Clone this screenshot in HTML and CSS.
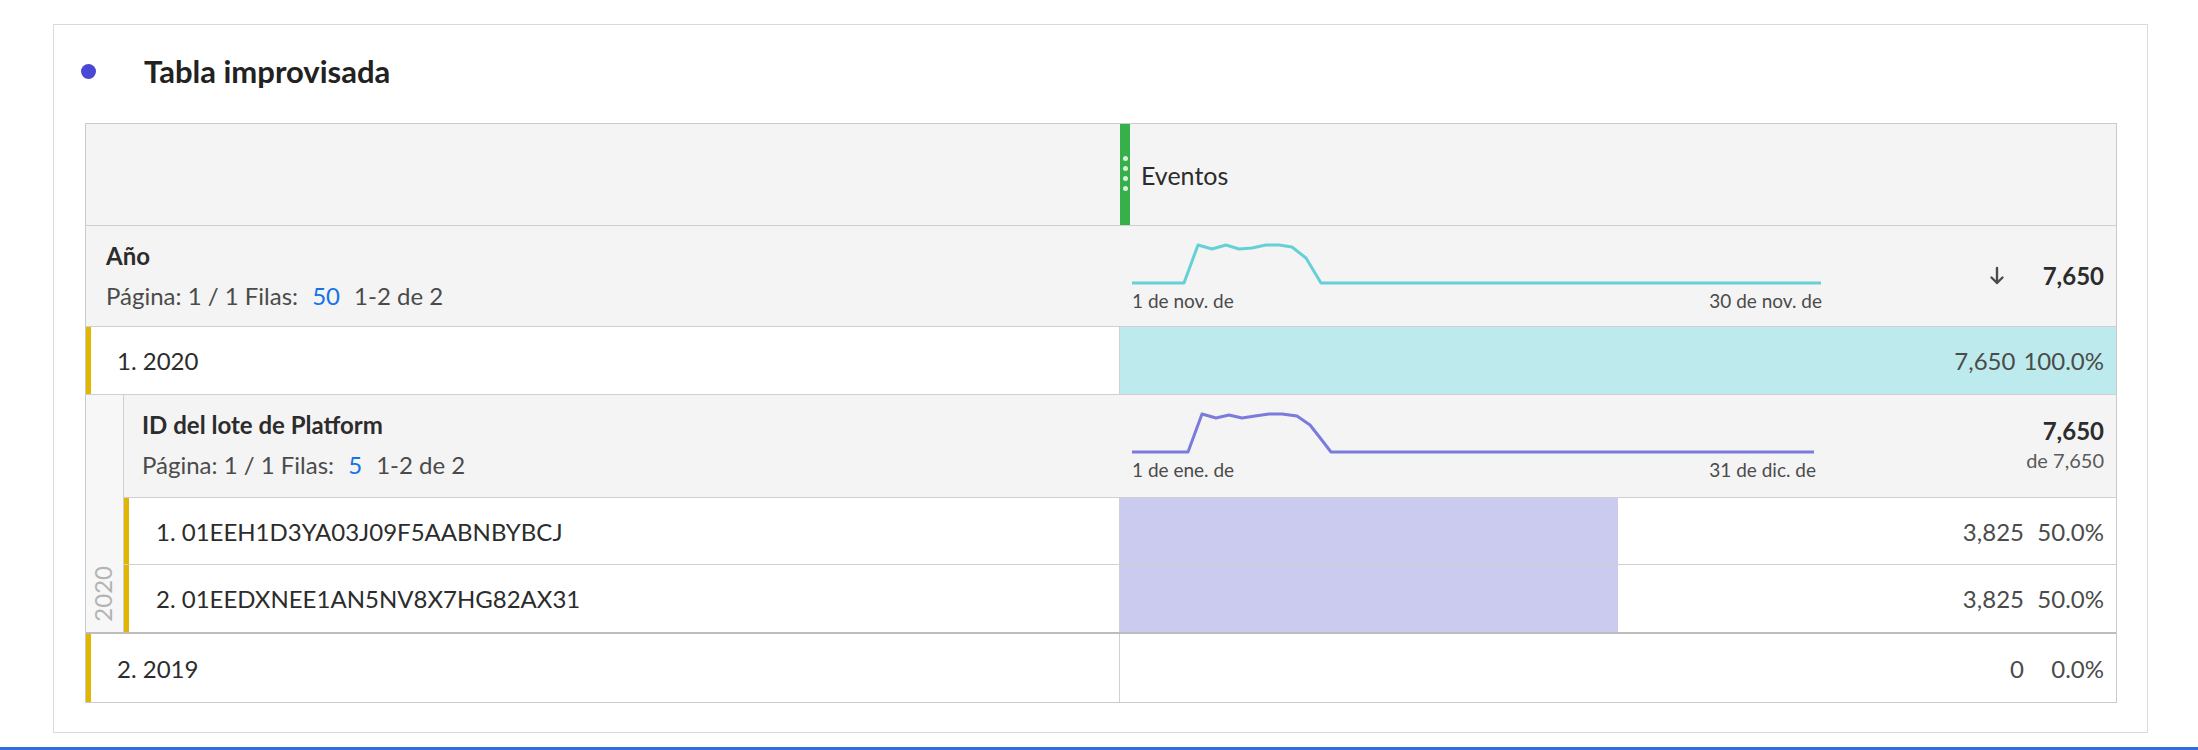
FILE: index.html
```html
<!DOCTYPE html>
<html lang="es">
<head>
<meta charset="utf-8">
<title>Tabla improvisada</title>
<link rel="stylesheet" href="styles.css">
</head>
<body>
<div class="card">
  <div class="card-head">
    <span class="dot"></span>
    <h1 class="title">Tabla improvisada</h1>
  </div>
  <div class="ft">
    <div class="row hdr">
      <div class="blank"></div>
      <div class="metric-head">
        <div class="grip"><i></i><i></i><i></i><i></i></div>
        <span class="metric-name">Eventos</span>
      </div>
    </div>

    <div class="row sect">
      <div class="dim">
        <div class="dim-name">Año</div>
        <div class="pager">Página: 1 / 1 Filas: <span class="link">50</span><span class="range">1-2 de 2</span></div>
      </div>
      <div class="summary">
        <div class="spark">
          <svg class="spark-svg" width="690" height="50" viewBox="0 0 690 50">
            <polyline class="line-teal" points="0,43 52,43 66,5 80,9 94,5 107,9 120,8 134,5 147,5 160,7 174,18 189,43 689,43"/>
          </svg>
          <div class="spark-labels w690"><span>1 de nov. de</span><span>30 de nov. de</span></div>
        </div>
        <div class="total sort">
          <svg class="arrow" width="16" height="20" viewBox="0 0 16 20"><path d="M8 2 V17 M2.5 11.5 L8 17 L13.5 11.5" fill="none" stroke="#4b4b4b" stroke-width="2.4" stroke-linecap="round" stroke-linejoin="round"/></svg>
          <b class="total-num">7,650</b>
        </div>
      </div>
    </div>

    <div class="row item">
      <div class="label">1. 2020</div>
      <div class="val">
        <div class="bar teal" style="width:100%"></div>
        <span class="num">7,650</span><span class="pct">100.0%</span>
      </div>
    </div>

    <div class="nest">
      <div class="gutter"><span class="gutter-text">2020</span></div>
      <div class="nest-body">
        <div class="row sect nsect">
          <div class="dim">
            <div class="dim-name">ID del lote de Platform</div>
            <div class="pager">Página: 1 / 1 Filas: <span class="link">5</span><span class="range">1-2 de 2</span></div>
          </div>
          <div class="summary">
            <div class="spark">
              <svg class="spark-svg" width="684" height="50" viewBox="0 0 684 50">
                <polyline class="line-purple" points="0,43 56,43 70,5 84,9 97,6 110,9 123,7 137,5 150,5 165,7 178,16 189,30 199,43 682,43"/>
              </svg>
              <div class="spark-labels w684"><span>1 de ene. de</span><span>31 de dic. de</span></div>
            </div>
            <div class="total stack">
              <b class="total-num">7,650</b>
              <span class="of">de 7,650</span>
            </div>
          </div>
        </div>
        <div class="row item nitem">
          <div class="label">1. 01EEH1D3YA03J09F5AABNBYBCJ</div>
          <div class="val">
            <div class="bar purple" style="width:50%"></div>
            <span class="num">3,825</span><span class="pct">50.0%</span>
          </div>
        </div>
        <div class="row item nitem">
          <div class="label">2. 01EEDXNEE1AN5NV8X7HG82AX31</div>
          <div class="val">
            <div class="bar purple" style="width:50%"></div>
            <span class="num">3,825</span><span class="pct">50.0%</span>
          </div>
        </div>
      </div>
    </div>

    <div class="row item last">
      <div class="label">2. 2019</div>
      <div class="val">
        <span class="num">0</span><span class="pct">0.0%</span>
      </div>
    </div>
  </div>
</div>
<div class="footbar"></div>
</body>
</html>
```

FILE: styles.css
```css
* { box-sizing: border-box; }
html, body { margin: 0; padding: 0; }
body {
  width: 2198px;
  height: 750px;
  overflow: hidden;
  background: #ffffff;
  font-family: "Lato", "Noto Sans", sans-serif;
  color: #2c2c2c;
}
.card {
  margin: 24px 0 0 53px;
  width: 2095px;
  height: 709px;
  border: 1px solid #dadada;
  background: #fff;
  padding-top: 28px;
}
.card-head {
  display: flex;
  align-items: center;
  height: 36px;
}
.dot {
  width: 15px;
  height: 15px;
  border-radius: 50%;
  background: #4848d4;
  margin-left: 27px;
  flex: none;
}
.title {
  margin: 0 0 0 48px;
  font-size: 31px;
  line-height: 36px;
  font-weight: 700;
  color: #222;
}
.ft {
  margin: 34px 0 0 31px;
  width: 2032px;
  border: 1px solid #cbcbcb;
}
.row {
  display: grid;
  grid-template-columns: 1033px 1fr;
  border-bottom: 1px solid #d0d0d0;
}
.nest-body .row { grid-template-columns: 995px 1fr; }
.hdr { height: 102px; background: #f4f4f4; }
.metric-head {
  display: flex;
  align-items: center;
}
.grip {
  align-self: stretch;
  width: 10px;
  margin-left: 1px;
  background: #35b04b;
  display: flex;
  flex-direction: column;
  align-items: center;
  gap: 5px;
  padding-top: 32px;
}
.grip i {
  display: block;
  width: 5px;
  height: 5px;
  border-radius: 50%;
  background: #d9f0dc;
}
.metric-name {
  margin-left: 11px;
  font-size: 25px;
  color: #2c2c2c;
}
.sect { height: 101px; background: #f4f4f4; }
.nsect { height: 103px; }
.dim { padding: 15px 0 0 20px; }
.nsect .dim { padding-left: 18px; }
.dim-name {
  font-size: 24px;
  line-height: 30px;
  font-weight: 700;
  color: #2c2c2c;
}
.pager {
  margin-top: 10px;
  font-size: 24px;
  line-height: 30px;
  color: #4b4b4b;
  white-space: nowrap;
}
.link { color: #1473e6; margin: 0 14px 0 8px; }
.summary {
  display: flex;
  justify-content: space-between;
  padding: 0 12px 0 13px;
}
.spark { padding-top: 14px; }
.spark-svg { display: block; }
.line-teal { fill: none; stroke: #66d0d6; stroke-width: 3; stroke-linejoin: round; }
.line-purple { fill: none; stroke: #7b7bdc; stroke-width: 3; stroke-linejoin: round; }
.spark-labels {
  display: flex;
  justify-content: space-between;
  font-size: 19px;
  line-height: 22px;
  color: #4b4b4b;
  margin-top: 0;
}
.w690 { width: 690px; }
.w684 { width: 684px; }
.total {
  font-size: 24px;
  line-height: 30px;
  color: #2c2c2c;
}
.sort {
  display: flex;
  align-items: flex-start;
  padding-top: 35px;
}
.arrow { margin: 5px 38px 0 0; }
.total-num { font-weight: 700; }
.stack {
  display: flex;
  flex-direction: column;
  align-items: flex-end;
  padding-top: 21px;
}
.of {
  font-size: 20px;
  line-height: 26px;
  color: #5a5a5a;
  margin-top: 1px;
}
.item { height: 68px; background: #fff; }
.nitem { height: 67px; }
.label {
  display: flex;
  align-items: center;
  border-left: 5px solid #e1b600;
  padding-left: 26px;
  font-size: 24px;
  color: #2c2c2c;
}
.nitem .label { padding-left: 27px; }
.val {
  position: relative;
  display: flex;
  justify-content: flex-end;
  align-items: center;
  border-left: 1px solid #d0d0d0;
  padding-right: 12px;
  font-size: 24px;
  color: #4b4b4b;
}
.bar {
  position: absolute;
  left: 0;
  top: 0;
  bottom: 0;
}
.teal { background: #bdebed; }
.purple { background: #cbcbf0; }
.num, .pct { position: relative; }
.pct { min-width: 72px; margin-left: 8px; text-align: right; }
.nest {
  display: grid;
  grid-template-columns: 38px 1fr;
  border-bottom: 2px solid #bdbdbd;
}
.nest .row.nitem:last-child { border-bottom: none; }
.gutter {
  background: #f7f7f7;
  border-right: 1px solid #cfcfcf;
  display: flex;
  justify-content: center;
  align-items: flex-end;
  padding: 0 3px 10px 0;
}
.gutter-text {
  writing-mode: vertical-rl;
  transform: rotate(180deg);
  font-size: 24px;
  line-height: 26px;
  color: #b3b3b3;
}
.last { border-bottom: none; }
.footbar {
  margin-top: 14px;
  height: 3px;
  background: #2e6fdc;
}
```
